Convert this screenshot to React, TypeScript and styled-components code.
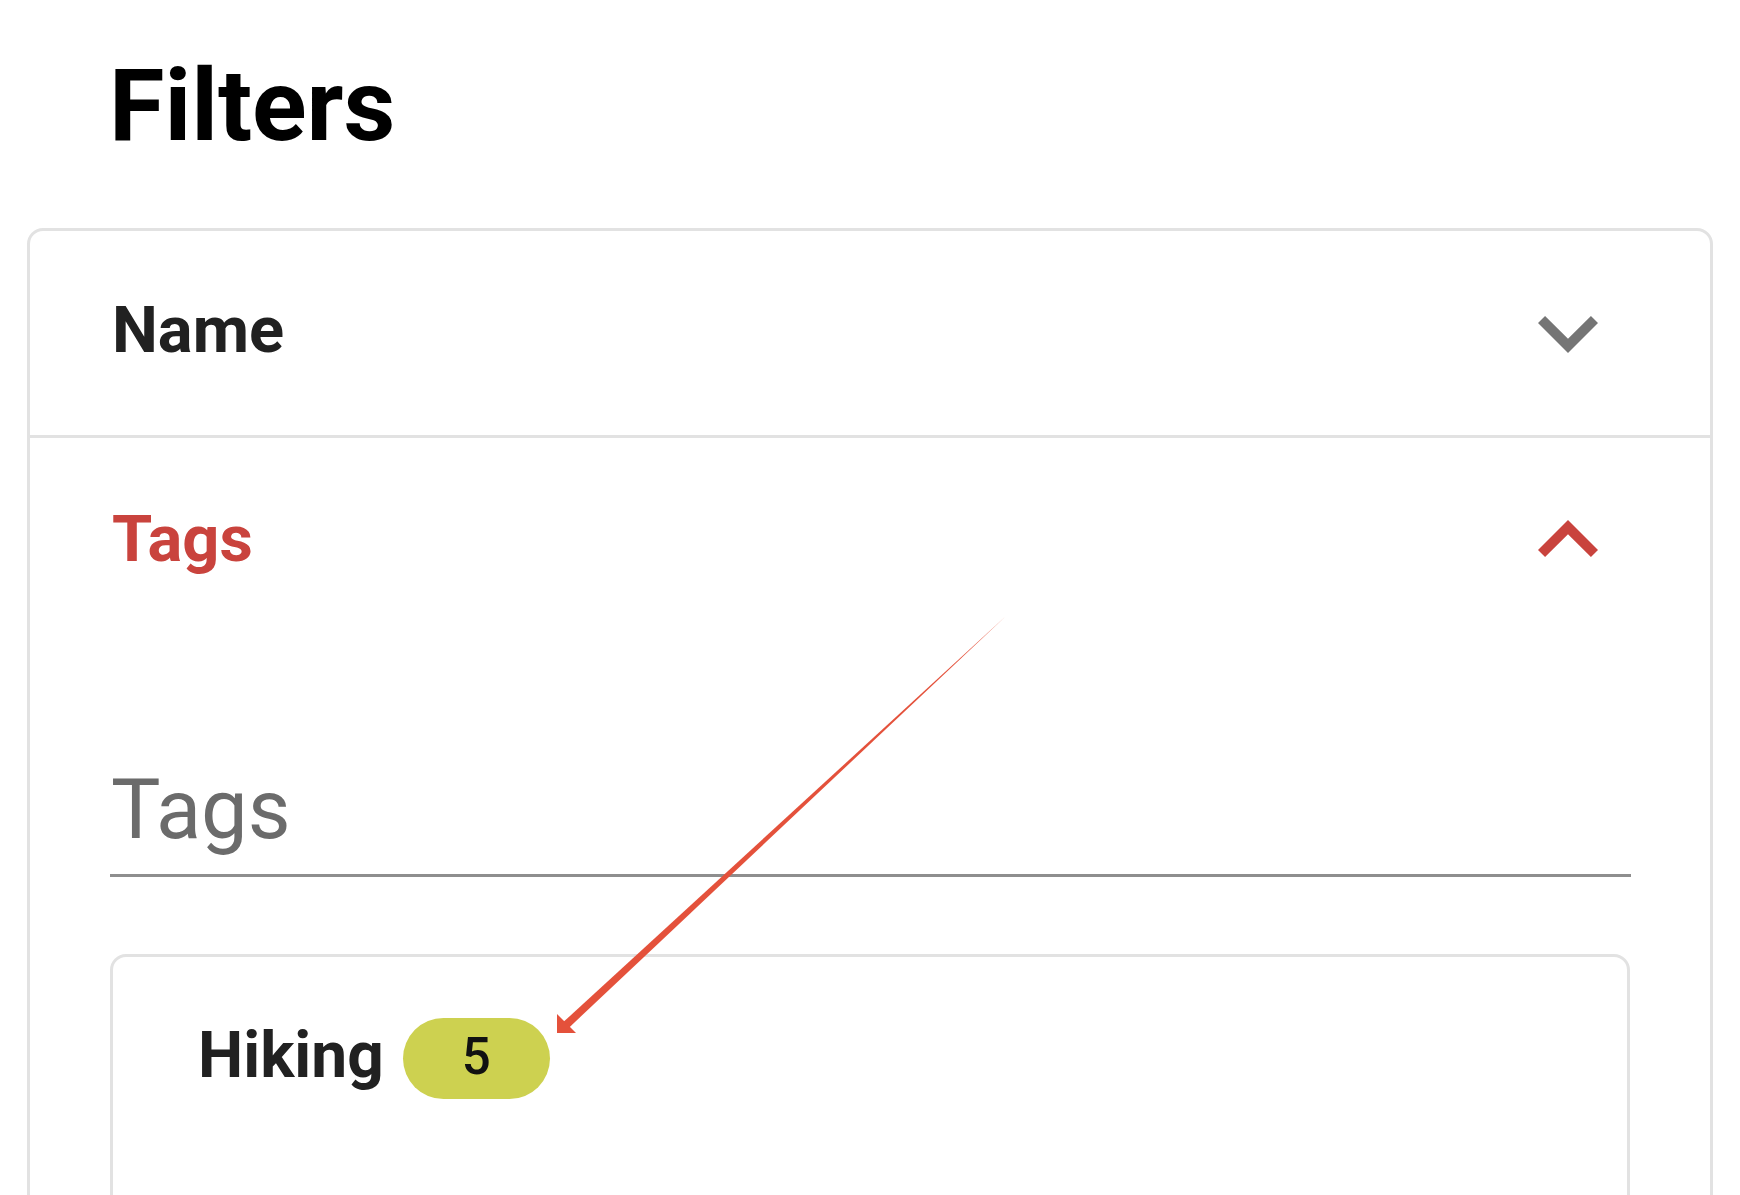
import React from "react";
import styled, { createGlobalStyle } from "styled-components";

const GlobalStyle = createGlobalStyle`
  html, body {
    margin: 0;
    padding: 0;
    background: #ffffff;
    overflow: hidden;
  }
  body {
    font-family: Roboto, "Liberation Sans", Arial, sans-serif;
    color: #212121;
  }
  * { box-sizing: border-box; }
`;

const Page = styled.div`
  position: relative;
  width: 1740px;
  height: 1195px;
  padding: 0 27px;
  overflow: hidden;
`;

const Title = styled.h1`
  margin: 45px 0 62px 0;
  padding-left: 82px;
  font-family: Roboto, "Liberation Sans", sans-serif;
  font-weight: 700;
  font-size: 101px;
  line-height: 121px;
  color: #000000;
  letter-spacing: 0;
`;

const Accordion = styled.div`
  border: 3px solid #e2e2e2;
  border-radius: 16px;
  min-height: 1200px;
`;

const Section = styled.section<{ $divider?: boolean }>`
  border-top: ${(p) => (p.$divider ? "3px solid #e2e2e2" : "none")};
`;

const Summary = styled.div`
  display: flex;
  align-items: center;
  justify-content: space-between;
  height: 204px;
  padding: 0 82px 0 82px;
`;

const SummaryLabel = styled.span<{ $active?: boolean }>`
  font-family: Roboto, "Liberation Sans", sans-serif;
  font-weight: 700;
  font-size: 65px;
  line-height: 77px;
  color: ${(p) => (p.$active ? "#c9433d" : "#212121")};
  padding-bottom: ${(p) => (p.$active ? "2px" : "5px")};
`;

const ChevronSvg = styled.svg`
  width: 120px;
  height: 120px;
  flex: none;
  display: block;
`;

const Chevron: React.FC<{ up?: boolean; color: string }> = ({ up, color }) => (
  <ChevronSvg viewBox="0 0 24 24" aria-hidden="true">
    {up ? (
      <path fill={color} d="M12 8l-6 6 1.41 1.41L12 10.83l4.59 4.58L18 14z" />
    ) : (
      <path fill={color} d="M16.59 8.59L12 13.17 7.41 8.59 6 10l6 6 6-6z" />
    )}
  </ChevronSvg>
);

const Details = styled.div`
  padding: 119px 80px 0 80px;
`;

const TagInput = styled.input`
  display: block;
  width: 100%;
  height: 97px;
  margin: 0;
  padding: 0 0 16px 1px;
  border: none;
  border-bottom: 3px solid #8e8e8e;
  outline: none;
  background: transparent;
  font-family: Roboto, "Liberation Sans", sans-serif;
  font-weight: 400;
  font-size: 83px;
  line-height: 97px;
  color: #212121;
  box-sizing: content-box;
  &::placeholder {
    color: #6b6b6b;
    opacity: 1;
  }
`;

const TagList = styled.div`
  margin-top: 77px;
  border: 3px solid #e2e2e2;
  border-radius: 16px;
  min-height: 500px;
  padding: 61px 82px 0 85px;
`;

const TagRow = styled.div`
  display: flex;
  align-items: center;
  gap: 19px;
`;

const TagName = styled.span`
  font-family: Roboto, "Liberation Sans", sans-serif;
  font-weight: 700;
  font-size: 64px;
  line-height: 76px;
  color: #212121;
  padding-bottom: 5px;
`;

const CountBadge = styled.span`
  display: flex;
  align-items: center;
  justify-content: center;
  width: 147px;
  height: 81px;
  border-radius: 41px;
  background: #cdd150;
  font-family: Roboto, "Liberation Sans", sans-serif;
  font-weight: 500;
  font-size: 51px;
  line-height: 60px;
  color: #111111;
  padding-bottom: 3px;
`;

const Annotation = styled.svg`
  position: absolute;
  left: 0;
  top: 0;
  width: 1740px;
  height: 1195px;
  pointer-events: none;
`;

export default function App() {
  return (
    <>
      <GlobalStyle />
      <Page>
        <Title>Filters</Title>
        <Accordion>
          <Section>
            <Summary>
              <SummaryLabel>Name</SummaryLabel>
              <Chevron color="#757575" />
            </Summary>
          </Section>
          <Section $divider>
            <Summary>
              <SummaryLabel $active>Tags</SummaryLabel>
              <Chevron up color="#c9433d" />
            </Summary>
            <Details>
              <TagInput placeholder="Tags" />
              <TagList>
                <TagRow>
                  <TagName>Hiking</TagName>
                  <CountBadge>5</CountBadge>
                </TagRow>
              </TagList>
            </Details>
          </Section>
        </Accordion>
        <Annotation viewBox="0 0 1740 1195" aria-hidden="true">
          <polygon
            points="1006,616 568.7,1027.9 563.3,1022.1"
            fill="#e4513b"
          />
          <polygon points="557,1033 576,1033 557,1014" fill="#e4513b" />
        </Annotation>
      </Page>
    </>
  );
}
